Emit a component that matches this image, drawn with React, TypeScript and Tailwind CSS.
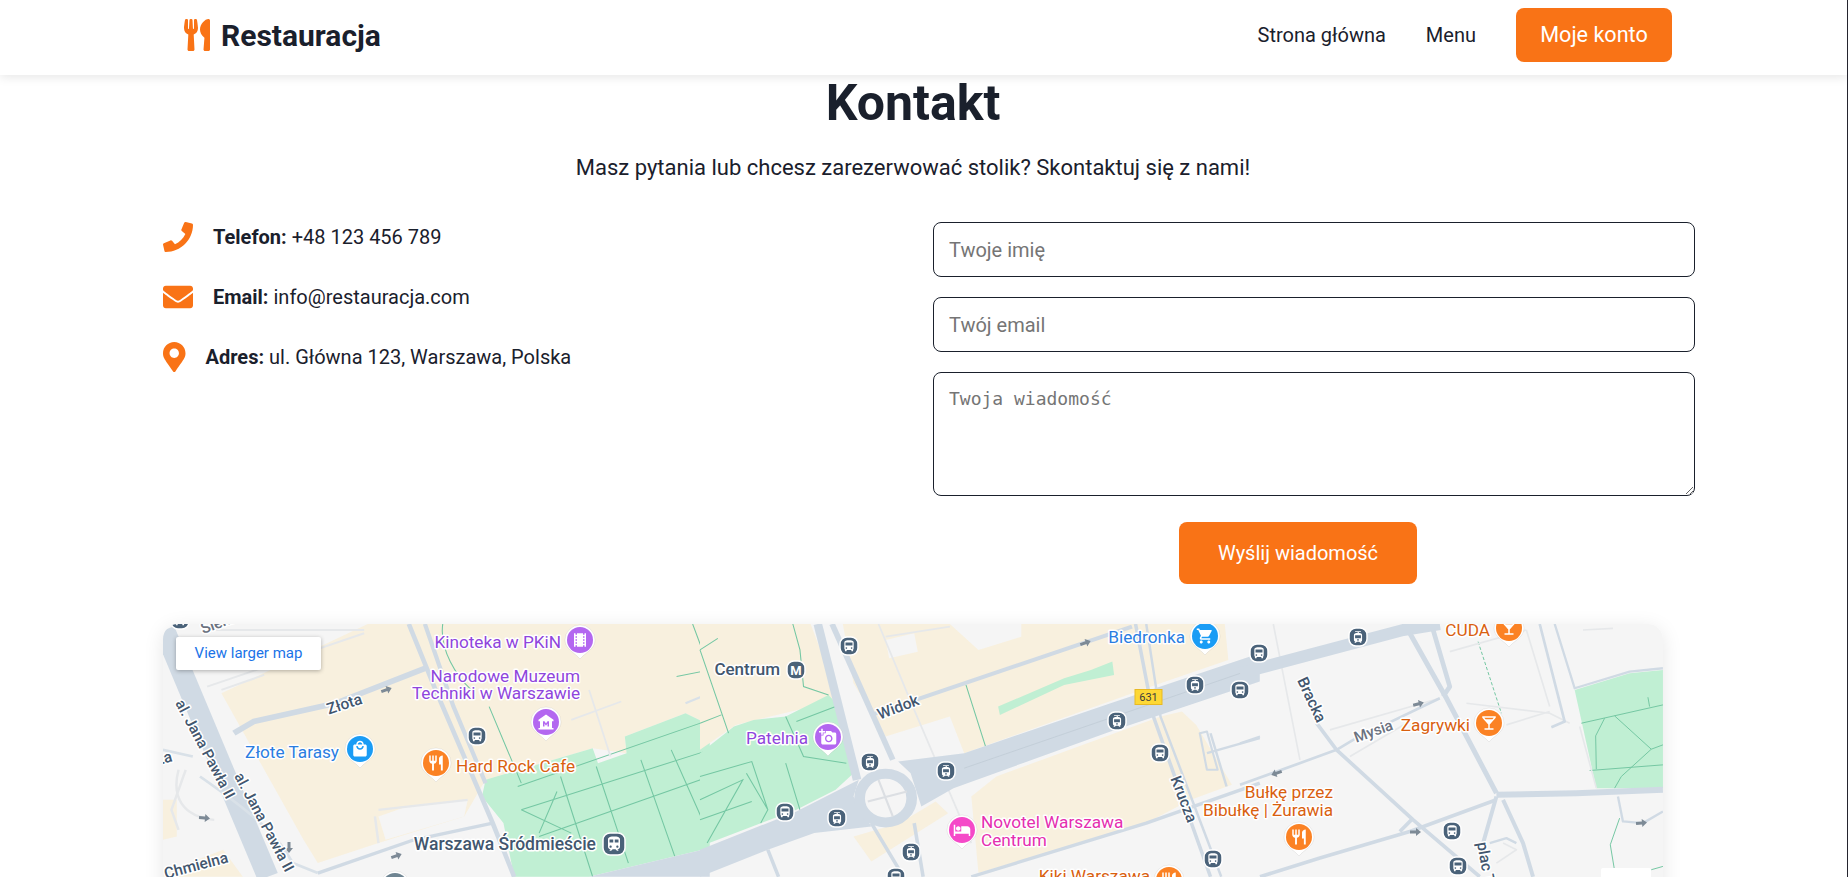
import React from "react";
import { FaEnvelope, FaMapMarkerAlt, FaPhone, FaUtensils } from "react-icons/fa";
import {
  MdAddAPhoto,
  MdDirectionsBus,
  MdHotel,
  MdLocalBar,
  MdLocalMall,
  MdLocalMovies,
  MdMuseum,
  MdRestaurant,
  MdShoppingCart,
  MdTrain,
  MdTram,
} from "react-icons/md";
import type { IconType } from "react-icons";

const ROAD = "#d0dae4";
const THIN = "#e6e8ea";
const TAN = "#f8f0de";
const GREEN = "#c0efd3";
const PATH = "#74c7a3";

type Road = [string, number, string?];

const PURPLE = "#8f45dc";
const BLUE = "#2a7de1";
const ORANGE = "#d9600f";
const PINK = "#e52eb0";
const DARK = "#42566e";

const roadsLeft: Road[] = [
  ["M200,240 L320,195 M170,60 L600,60 M160,230 L600,70", 6, THIN],
  ["M640,600 L890,570 M630,620 L640,700 M80,480 C60,560 90,620 180,630 M100,480 L60,600 L80,660", 7, THIN],
  ["M40,60 L330,801", 60, ROAD],
  ["M235,370 L290,335 L520,280 L770,175", 17, ROAD],
  ["M725,42 L800,240 L960,640 L1020,801", 13, ROAD],
  ["M770,42 L850,290 L940,520", 12, ROAD],
  ["M470,790 L740,690 L960,640", 10, ROAD],
  ["M36,420 L120,440 M140,500 C300,620 360,680 400,760 L470,790", 8, "#d9e1e8"],
  ["M1180,330 L1320,275 M1230,240 L1290,440", 5, THIN],
  ["M1500,280 L1568,250", 6, "#d9e1e8"],
];

const roadsMid: Road[] = [
  ["M500,42 L600,300 L760,700 M520,80 L700,50", 5, THIN],
  ["M330,42 L440,510", 24, ROAD],
  ["M370,42 L540,450", 16, ROAD],
  ["M480,640 L570,801 M600,640 L625,801 M190,720 L220,801", 10, ROAD],
  ["M480,315 L1210,50", 12, ROAD],
  ["M1220,42 L1270,320 L1430,801", 10, ROAD],
  ["M1250,42 L1290,320 L1460,801", 7, ROAD],
  ["M760,801 L1250,640 L1568,520", 10, ROAD],
  ["M1400,370 L1420,480 L1450,480 L1420,365 Z", 6, ROAD],
  ["M1420,430 L1568,385 M1430,370 L1475,530", 7, ROAD],
];

const roadsRight: Road[] = [
  ["M100,42 L180,450 M630,125 L860,60 M680,280 L930,310 L990,340 M800,345 L930,305 M860,60 L930,290 M1030,60 L1120,55 M270,360 L600,265 M330,440 L500,340 M770,760 L830,720 L790,700 M1020,350 L1070,535", 5, THIN],
  ["M0,190 L490,60 L600,42", 36, ROAD],
  ["M510,70 L620,265 L770,550", 15, ROAD],
  ["M580,60 L630,230 L610,260", 14, ROAD],
  ["M770,555 L1010,550 L1270,540", 18, ROAD],
  ["M770,560 L730,700 M790,570 L850,700 L880,801", 12, ROAD],
  ["M230,340 L290,420 L520,630 L720,801", 11, ROAD],
  ["M0,525 L290,420 L340,390 L600,265", 8, ROAD],
  ["M60,801 L240,745 L510,665 L770,570 M480,665 L520,625", 11, ROAD],
  ["M900,42 L975,335 L935,352", 8, ROAD],
  ["M945,42 L1005,235 L1170,185 L1270,175", 7, ROAD],
  ["M1135,560 L1150,635 L1210,640 L1270,605", 7, ROAD],
  ["M0,400 L60,380", 6, ROAD],
  ["M750,700 L800,685 L830,700", 7, ROAD],
];

type Label = {
  x: number;
  y: number;
  text: string;
  color: string;
  anchor?: "start" | "end" | "middle";
  rotate?: number;
  weight?: number;
  size?: number;
};

const labels: Label[] = [
  { x: 561, y: 648, text: "Kinoteka w PKiN", color: PURPLE, anchor: "end" },
  { x: 580, y: 682, text: "Narodowe Muzeum", color: PURPLE, anchor: "end" },
  { x: 580, y: 699, text: "Techniki w Warszawie", color: PURPLE, anchor: "end" },
  { x: 339, y: 758, text: "Złote Tarasy", color: BLUE, anchor: "end" },
  { x: 456, y: 772, text: "Hard Rock Cafe", color: ORANGE },
  { x: 596, y: 850, text: "Warszawa Śródmieście", color: DARK, anchor: "end", weight: 500, size: 17.5 },
  { x: 346, y: 709, text: "Złota", color: DARK, anchor: "middle", rotate: -18, weight: 500, size: 15.5 },
  { x: 173, y: 761, text: "Złota", color: DARK, anchor: "end", rotate: -15, weight: 500, size: 15.5 },
  { x: 175, y: 703, text: "al. Jana Pawła II", color: DARK, rotate: 62, weight: 500, size: 15 },
  { x: 234, y: 776, text: "al. Jana Pawła II", color: DARK, rotate: 62, weight: 500, size: 15 },
  { x: 229, y: 862, text: "Chmielna", color: DARK, anchor: "end", rotate: -15, weight: 500, size: 15.5 },
  { x: 203, y: 634, text: "Sienna", color: "#6b7280", rotate: -20, weight: 500, size: 15.5 },
  { x: 780, y: 675, text: "Centrum", color: DARK, anchor: "end", weight: 500, size: 17 },
  { x: 808, y: 744, text: "Patelnia", color: PURPLE, anchor: "end" },
  { x: 900, y: 712, text: "Widok", color: DARK, anchor: "middle", rotate: -21, weight: 500, size: 15.5 },
  { x: 1185, y: 643, text: "Biedronka", color: BLUE, anchor: "end" },
  { x: 1179, y: 801, text: "Krucza", color: DARK, anchor: "middle", rotate: 69, weight: 500, size: 15.5 },
  { x: 981, y: 828, text: "Novotel Warszawa", color: PINK },
  { x: 981, y: 846, text: "Centrum", color: PINK },
  { x: 1150, y: 882, text: "Kiki Warszawa", color: ORANGE, anchor: "end" },
  { x: 1333, y: 798, text: "Bułkę przez", color: ORANGE, anchor: "end" },
  { x: 1333, y: 816, text: "Bibułkę | Żurawia", color: ORANGE, anchor: "end" },
  { x: 1470, y: 731, text: "Zagrywki", color: ORANGE, anchor: "end" },
  { x: 1490, y: 636, text: "CUDA", color: ORANGE, anchor: "end" },
  { x: 1307, y: 702, text: "Bracka", color: DARK, anchor: "middle", rotate: 65, weight: 500, size: 15.5 },
  { x: 1375, y: 736, text: "Mysia", color: "#6b7280", anchor: "middle", rotate: -20, weight: 500, size: 15 },
  { x: 1477, y: 843, text: "plac Trzech Krzyży", color: DARK, rotate: 80, weight: 500, size: 15.5 },
];

const pins: [number, number, string, IconType][] = [
  [580, 640, "#b367f0", MdLocalMovies],
  [546, 722, "#b367f0", MdMuseum],
  [360, 749, "#1a9cf5", MdLocalMall],
  [436, 763, "#fb8224", MdRestaurant],
  [828, 737, "#b367f0", MdAddAPhoto],
  [1205, 636, "#1a9cf5", MdShoppingCart],
  [962, 830, "#f549c8", MdHotel],
  [1169, 880, "#fb8224", MdRestaurant],
  [1299, 837, "#fb8224", MdRestaurant],
  [1489, 723, "#fb8224", MdLocalBar],
  [1509, 628, "#fb8224", MdLocalBar],
  [395, 886, "#6f8592", MdTrain],
];

const chips: [number, number, IconType][] = [
  [477, 736, MdDirectionsBus],
  [180, 620, MdDirectionsBus],
  [849, 646, MdDirectionsBus],
  [1195, 685, MdTram],
  [1240, 690, MdDirectionsBus],
  [1117, 721, MdTram],
  [1160, 753, MdDirectionsBus],
  [870, 762, MdTram],
  [946, 771, MdTram],
  [785, 812, MdDirectionsBus],
  [837, 818, MdTram],
  [911, 852, MdTram],
  [1213, 859, MdDirectionsBus],
  [896, 877, MdDirectionsBus],
  [1358, 637, MdTram],
  [1259, 653, MdDirectionsBus],
  [1452, 831, MdDirectionsBus],
  [1458, 866, MdDirectionsBus],
];

const arrows: [number, number, number][] = [
  [386, 690, -20],
  [204, 818, 5],
  [289, 847, 90],
  [396, 856, -20],
  [1085, 643, -20],
  [1418, 704, -15],
  [1277, 773, 160],
  [1415, 832, 0],
  [1641, 823, -5],
];

function Roads({ items }: { items: Road[] }) {
  return (
    <>
      {items.map(([d, w, c], i) => (
        <path key={i} d={d} fill="none" stroke={c ?? ROAD} strokeWidth={w} strokeLinejoin="round" />
      ))}
    </>
  );
}

function Pin({ x, y, color, icon: Icon }: { x: number; y: number; color: string; icon: IconType }) {
  return (
    <g>
      <path
        d={`M${x - 15},${y} a15,15 0 1 1 30,0 c0,9 -9,12 -15,19 c-6,-7 -15,-10 -15,-19 Z`}
        fill="#fff"
        stroke="#00000022"
        strokeWidth="0.5"
      />
      <circle cx={x} cy={y} r={13} fill={color} />
      <Icon x={x - 9} y={y - 9} size={18} color="#fff" />
    </g>
  );
}

function Chip({ x, y, icon: Icon, size = 18 }: { x: number; y: number; icon: IconType; size?: number }) {
  const half = size / 2;
  return (
    <g>
      <rect x={x - half} y={y - half} width={size} height={size} rx={7} fill="#4a6279" stroke="#fff" strokeWidth="1.5" />
      <Icon x={x - half + 2} y={y - half + 2} size={size - 4} color="#fff" />
    </g>
  );
}

function MapDrawing() {
  return (
    <svg viewBox="163 624 1500 450" className="block h-full w-full" style={{ fontFamily: "Roboto, sans-serif" }}>
      <rect x="163" y="624" width="1500" height="450" fill="#f5f5f5" />

      <g transform="translate(150 610) scale(0.357 0.333)">
        <path d="M610,42 L1568,42 L1568,345 L1500,310 L1330,380 L1335,430 L1240,415 L940,510 L880,620 L640,700 L470,760 L430,690 L200,250 Z" fill={TAN} />
        <path d="M36,570 L75,570 L75,680 L36,690 Z" fill={TAN} />
        <path d="M36,790 L205,720 L260,801 L36,801 Z" fill={TAN} />
        <path d="M640,620 L720,590 L890,570 L880,620 L660,690 Z" fill="#f5f5f5" />
        <path d="M940,510 L1240,415 L1255,460 L1335,430 L1330,380 L1500,310 L1568,345 L1568,715 L1230,801 L1020,801 L990,640 L930,560 Z" fill={GREEN} />
        <path
          d="M1030,530 L1568,330 M1040,600 L1568,420 M1090,680 L1568,500 M1150,500 L1240,801 M1250,470 L1340,760 M1375,450 L1470,740 M1460,420 L1568,680 M1140,545 L1090,670 M1040,600 L1180,670 M950,290 L1040,520 M1520,42 L1568,180 L1475,200 M820,42 C810,120 860,200 900,240"
          fill="none"
          stroke={PATH}
          strokeWidth="3"
        />
        <path d="M1230,801 L1568,715 L1568,801 Z" fill={ROAD} />
        <Roads items={roadsLeft} />
      </g>

      <g transform="translate(700 610) scale(0.357 0.333)">
        <path d="M400,42 L700,42 L780,120 L900,80 L900,42 L1470,42 L1480,150 L1290,220 L740,430 L700,320 L520,380 L430,220 Z" fill={TAN} />
        <path d="M520,90 L600,70 L610,125 L530,145 Z" fill="#f5f5f5" />
        <path d="M0,42 L310,42 L390,270 L100,345 L0,420 Z" fill={TAN} />
        <path d="M0,430 L95,350 L150,330 L240,320 L360,255 L390,290 L430,490 L380,540 L270,600 L0,710 Z" fill={GREEN} />
        <path d="M830,500 L1290,320 L1350,305 L1390,345 L1490,525 L1375,570 L1250,640 L780,790 L760,560 Z" fill={TAN} />
        <path d="M430,680 L560,640 L660,575 L695,610 L480,755 Z" fill={TAN} />
        <path d="M835,290 L1020,205 L1095,180 L1155,155 L1160,195 L1020,225 L840,315 Z" fill={GREEN} />
        <path
          d="M0,120 L50,85 M0,340 L60,315 M0,120 L80,370 M260,42 L280,120 L290,230 L360,255 M745,225 L800,410 M0,500 L145,455 L190,600 L170,640 M0,570 L120,510 L20,700 M240,320 L290,440 L410,460 M240,460 L280,600 M130,490 L190,600 M0,630 L145,575 M380,290 L270,335"
          fill="none"
          stroke={PATH}
          strokeWidth="3"
        />
        <Roads items={roadsMid} />
        <path d="M555,455 L740,430 L1150,280 L1568,130 L1568,215 L1150,365 L710,535 L620,590 L590,490 Z" fill={ROAD} />
        <path d="M445,510 L270,605 L0,720 L0,801 L190,720 L320,670 L480,650 L430,560 Z" fill={ROAD} />
        <path d="M740,475 L1568,170" stroke="#bdc9d4" strokeWidth="2" fill="none" />
        <circle cx="520" cy="565" r="73" fill="#f5f5f5" stroke={ROAD} strokeWidth="30" />
        <path d="M470,575 L580,545 M500,510 L540,620" stroke="#dcdfe3" strokeWidth="6" />
      </g>

      <g transform="translate(1240 610) scale(0.333)">
        <path d="M1005,240 L1170,190 L1270,180 L1270,535 L1070,535 Z" fill={GREEN} />
        <path
          d="M1025,340 L1270,285 M1225,262 L1230,290 M1125,318 L1235,418 L1270,405 M1095,325 L1068,378 L1070,478 M1050,482 L1270,465 M1235,418 L1145,500 L1125,535 M1140,625 L1112,705 L1128,801 M1235,780 L1270,770"
          fill="none"
          stroke={PATH}
          strokeWidth="3"
        />
        <path d="M715,95 L785,310" fill="none" stroke={PATH} strokeWidth="3" strokeDasharray="10 6" />
        <Roads items={roadsRight} />
      </g>

      {arrows.map(([x, y, r], i) => (
        <path key={i} d="M-5,-1.5 L1,-1.5 L1,-4 L6,0 L1,4 L1,1.5 L-5,1.5 Z" fill="#7d8a96" transform={`translate(${x} ${y}) rotate(${r})`} />
      ))}

      {labels.map((l, i) => (
        <text
          key={i}
          x={l.x}
          y={l.y}
          fill={l.color}
          fontSize={l.size ?? 17.2}
          fontWeight={l.weight ?? 400}
          textAnchor={l.anchor ?? "start"}
          transform={l.rotate ? `rotate(${l.rotate} ${l.x} ${l.y})` : undefined}
          stroke="#fff"
          strokeWidth="3"
          strokeLinejoin="round"
          paintOrder="stroke"
        >
          {l.text}
        </text>
      ))}

      {pins.map(([x, y, c, icon], i) => (
        <Pin key={i} x={x} y={y} color={c} icon={icon} />
      ))}
      {chips.map(([x, y, icon], i) => (
        <Chip key={i} x={x} y={y} icon={icon} />
      ))}
      <g>
        <rect x="787" y="661" width="18" height="18" rx="7" fill="#4a6279" stroke="#fff" strokeWidth="1.5" />
        <text x="796" y="675" fontSize="13" fontWeight="700" textAnchor="middle" fill="#fff">M</text>
      </g>
      <Chip x={614} y={844} icon={MdTrain} size={22} />

      <rect x="1135" y="689.5" width="27" height="15" fill="#fdd835" stroke="#e8b923" />
      <text x="1148.5" y="701" fontSize="11" textAnchor="middle" fill="#3c3c3c">631</text>
    </svg>
  );
}

const contactItems = [
  { icon: FaPhone, iconSize: "h-[30px] w-[30px]", label: "Telefon:", value: "+48 123 456 789" },
  { icon: FaEnvelope, iconSize: "h-[30px] w-[30px]", label: "Email:", value: "info@restauracja.com" },
  { icon: FaMapMarkerAlt, iconSize: "h-[30px] w-[22.5px]", label: "Adres:", value: "ul. Główna 123, Warszawa, Polska" },
];

export default function App() {
  return (
    <div className="h-screen overflow-hidden border-r border-[#24242e] bg-white font-['Roboto',sans-serif] text-[#1a202c]">
      <header className="relative z-10 flex h-[75px] items-center justify-between bg-white pb-[5px] pl-[184px] pr-[175px] shadow-[0_2px_10px_rgba(0,0,0,0.1)]">
        <div className="flex items-center gap-[11px]">
          <FaUtensils className="h-[32px] w-[26px] text-[#f97316]" />
          <span className="text-[30px] font-bold">Restauracja</span>
        </div>
        <nav className="flex items-center gap-10 text-[20px] text-[#1a202c]">
          <a>Strona główna</a>
          <a>Menu</a>
          <a className="flex h-[54px] w-[156px] items-center justify-center rounded-lg bg-[#f97316] text-[21.6px] text-white">Moje konto</a>
        </nav>
      </header>

      <main className="w-[1663px] pl-[163px]">
        <h1 className="text-center text-[50px] leading-[56px] font-bold">Kontakt</h1>
        <p className="mt-[22px] text-center text-[22px] leading-[30px]">
          Masz pytania lub chcesz zarezerwować stolik? Skontaktuj się z nami!
        </p>

        <div className="mt-[39px] grid grid-cols-2 gap-10">
          <div className="flex flex-col gap-[30px]">
            {contactItems.map((item) => (
              <div key={item.label} className="flex h-[30px] items-center gap-5 text-[20px]">
                <item.icon className={`${item.iconSize} text-[#f97316]`} />
                <p>
                  <strong className="font-bold">{item.label}</strong> {item.value}
                </p>
              </div>
            ))}
          </div>

          <form className="flex flex-col items-center gap-5">
            <input
              placeholder="Twoje imię"
              className="h-[55px] w-[762px] self-start rounded-lg border border-[#1a202c] px-[15px] text-[20px] placeholder:text-[#757575]"
            />
            <input
              placeholder="Twój email"
              className="h-[55px] w-[762px] self-start rounded-lg border border-[#1a202c] px-[15px] text-[20px] placeholder:text-[#757575]"
            />
            <textarea
              placeholder="Twoja wiadomość"
              className="block h-[124px] w-[762px] self-start rounded-lg border border-[#1a202c] px-[15px] py-[15px] font-['DejaVu_Sans_Mono',monospace] text-[18px] leading-[21px] placeholder:text-[#757575]"
            />
            <button type="button" className="mt-[6px] h-[62px] w-[238px] rounded-lg bg-[#f97316] text-[20px] text-white">
              Wyślij wiadomość
            </button>
          </form>
        </div>

        <div className="relative mt-10 h-[450px] w-[1500px] overflow-hidden rounded-[15px] shadow-[0_4px_20px_rgba(0,0,0,0.1)]">
          <MapDrawing />
          <a className="absolute top-[13px] left-[13px] flex h-[33px] w-[145px] items-center justify-center rounded-[2px] bg-white text-[15px] text-[#1a73e8] shadow-[0_1px_4px_rgba(0,0,0,0.3)]">
            View larger map
          </a>
          <div className="absolute top-[244px] left-[1438px] h-[81px] w-[50px] rounded-[2px] bg-white" />
        </div>
      </main>
    </div>
  );
}
